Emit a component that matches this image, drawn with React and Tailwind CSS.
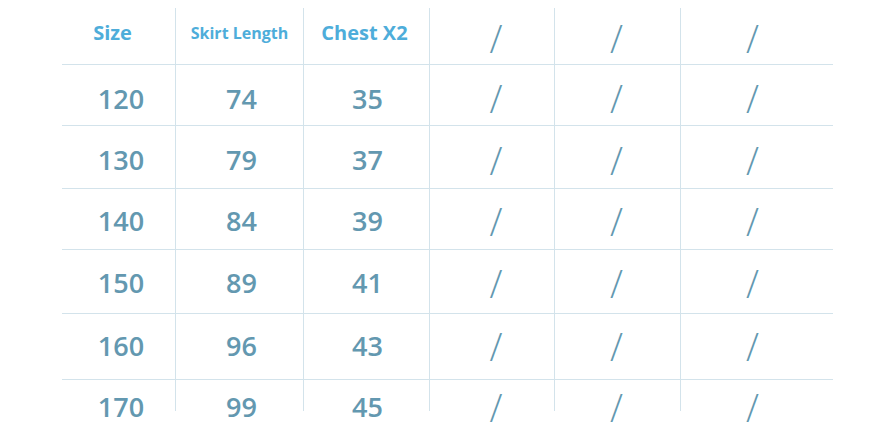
import React from "react";

const rows = [
  { v: ["120", "74", "35"], h: "h-[61px]", pad: "pt-[6px]" },
  { v: ["130", "79", "37"], h: "h-[63px]", pad: "pt-[5px]" },
  { v: ["140", "84", "39"], h: "h-[61px]", pad: "pt-[3px]" },
  { v: ["150", "89", "41"], h: "h-[64px]", pad: "pt-[2px]" },
  { v: ["160", "96", "43"], h: "h-[66px]", pad: "pb-[2px]" },
];

const widths = ["w-[113px]", "w-[128px]", "w-[126px]", "w-[125px]", "w-[126px]", "w-[153px]"];
const slashShift = ["pl-[8px]", "pr-[2px]", "pr-[9px]"];

function Row({ values, h, pad, last }) {
  return (
    <div className={`flex ${h} ${last ? "" : "border-b border-[#d3e3eb]"}`}>
      {values.map((v, i) => (
        <div
          key={i}
          className={`${widths[i]} ${i > 0 ? "border-l border-[#d3e3eb]" : ""} flex items-center justify-center ${pad} ${i === 0 ? "pl-[5px]" : i === 1 ? "pl-[4px]" : "pl-[2px]"} text-[27px] font-semibold leading-none text-[#6398b0]`}
        >
          {v}
        </div>
      ))}
      {[0, 1, 2].map((j) => (
        <div
          key={"s" + j}
          className={`${widths[3 + j]} border-l border-[#d3e3eb] flex items-center justify-center ${pad} ${slashShift[j]} text-[38px] font-light leading-none text-[#6398b0]`}
        >
          /
        </div>
      ))}
    </div>
  );
}

export default function App() {
  return (
    <div
      className="w-[892px] h-[442px] bg-white overflow-hidden pt-[8px] pl-[62px]"
      style={{ fontFamily: '"Open Sans", "Noto Sans", sans-serif' }}
    >
      <div className="w-[771px]">
        <div className="flex h-[57px] border-b border-[#d3e3eb]">
          <div className="w-[113px] flex items-center justify-center pb-[6px] pr-[12px] text-[20px] font-bold text-[#4eadda]">
            Size
          </div>
          <div className="w-[128px] border-l border-[#d3e3eb] flex items-center justify-center pb-[6px] text-[16px] font-bold text-[#4eadda]">
            Skirt Length
          </div>
          <div className="w-[126px] border-l border-[#d3e3eb] flex items-center justify-center pb-[6px] pr-[4px] text-[20px] font-bold text-[#4eadda]">
            Chest X2
          </div>
          {[0, 1, 2].map((j) => (
            <div
              key={j}
              className={`${widths[3 + j]} border-l border-[#d3e3eb] flex items-center justify-center pt-[3px] ${slashShift[j]} text-[38px] font-light leading-none text-[#6398b0]`}
            >
              /
            </div>
          ))}
        </div>
        {rows.map((r, i) => (
          <Row key={i} values={r.v} h={r.h} pad={r.pad} />
        ))}
        <Row values={["170", "99", "45"]} h="h-[31px]" pad="pt-[22px]" last />
      </div>
    </div>
  );
}
